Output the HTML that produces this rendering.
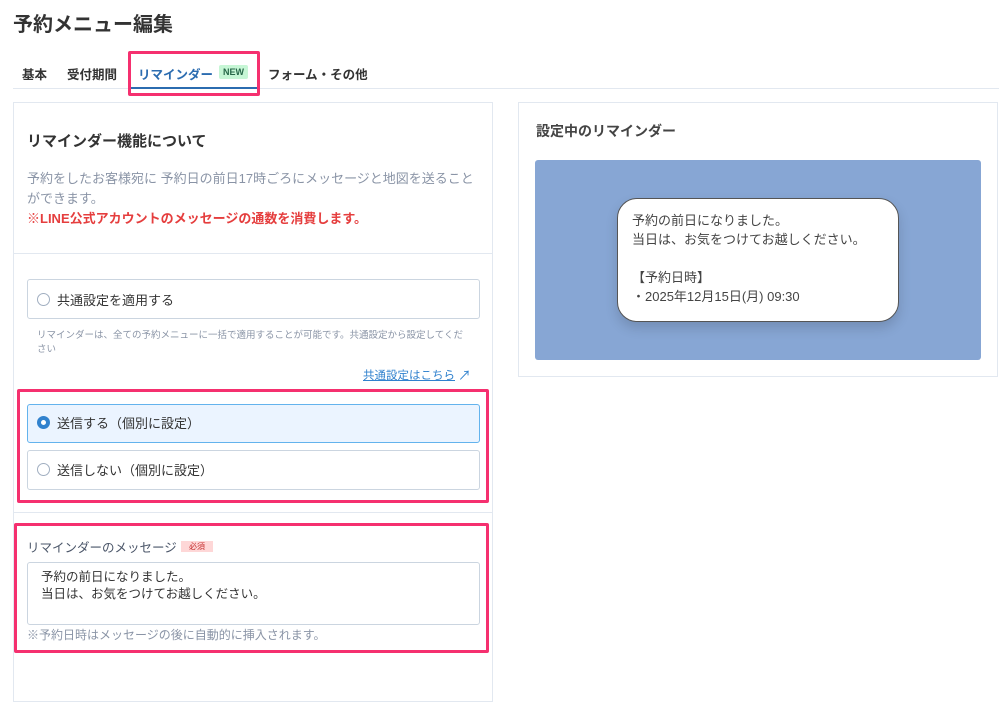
<!DOCTYPE html>
<html><head><meta charset="utf-8"><style>
*{box-sizing:border-box;margin:0;padding:0}
body{width:999px;height:668px;overflow:hidden;background:#fff;font-family:"Liberation Sans","Noto Sans CJK JP",sans-serif;color:#333;position:relative}
.a{position:absolute;white-space:nowrap}
.box{position:absolute;border:1px solid #cbd5e0;border-radius:3px;background:#fff}
.rad{position:absolute;width:13px;height:13px;border:1px solid #a0aec0;border-radius:50%;background:#fff}
.pink{position:absolute;border:3px solid #f5306f;border-radius:2px}
</style></head><body>
<div class="a" style="left:13px;top:8px;font-size:20px;font-weight:bold;color:#333">予約メニュー編集</div>
<div class="a" style="left:22px;top:64px;font-size:12.5px;font-weight:bold;color:#333">基本</div>
<div class="a" style="left:67px;top:64px;font-size:12.5px;font-weight:bold;color:#333">受付期間</div>
<div class="a" style="left:138px;top:64px;font-size:12.5px;font-weight:bold;color:#2b6cb0">リマインダー</div>
<div class="a" style="left:219px;top:65px;width:29px;height:14px;background:#c6f6d5;color:#276749;font-size:9px;font-weight:bold;text-align:center;line-height:14px;border-radius:2px">NEW</div>
<div class="a" style="left:268px;top:64px;font-size:12.5px;font-weight:bold;color:#333">フォーム・その他</div>
<div class="a" style="left:13px;top:88px;width:986px;height:1px;background:#e2e8f0"></div>
<div class="a" style="left:130px;top:87px;width:127px;height:2px;background:#2b6cb0"></div>
<div class="pink" style="left:128px;top:51px;width:132px;height:45px"></div>

<div class="a" style="left:13px;top:102px;width:480px;height:600px;border:1px solid #e2e8f0"></div>
<div class="a" style="left:27px;top:130px;font-size:15px;font-weight:bold;color:#333">リマインダー機能について</div>
<div class="a" style="left:27px;top:169px;font-size:13px;color:#8a94a6;line-height:20px">予約をしたお客様宛に 予約日の前日17時ごろにメッセージと地図を送ること<br>ができます。</div>
<div class="a" style="left:27px;top:208px;font-size:13px;font-weight:bold;color:#e53e3e">※LINE公式アカウントのメッセージの通数を消費します。</div>
<div class="a" style="left:14px;top:253px;width:478px;height:1px;background:#e2e8f0"></div>

<div class="box" style="left:27px;top:279px;width:453px;height:40px"></div>
<div class="rad" style="left:37px;top:293px"></div>
<div class="a" style="left:57px;top:290px;font-size:13px;color:#333">共通設定を適用する</div>
<div class="a" style="left:37px;top:329px;font-size:9.5px;color:#8a94a6;line-height:14px">リマインダーは、全ての予約メニューに一括で適用することが可能です。共通設定から設定してくだ<br>さい</div>
<div class="a" style="left:363px;top:367px;font-size:11.5px;color:#3182ce;text-decoration:underline">共通設定はこちら</div>
<div class="a" style="left:458px;top:365px;font-size:13px;color:#3182ce">↗</div>

<div class="pink" style="left:17px;top:389px;width:472px;height:114px"></div>
<div class="box" style="left:27px;top:404px;width:453px;height:39px;background:#ebf4ff;border-color:#63b3ed"></div>
<div class="rad" style="left:37px;top:416px;border:4px solid #3182ce"></div>
<div class="a" style="left:57px;top:413px;font-size:13px;color:#333">送信する（個別に設定）</div>
<div class="box" style="left:27px;top:450px;width:453px;height:40px"></div>
<div class="rad" style="left:37px;top:463px"></div>
<div class="a" style="left:57px;top:460px;font-size:13px;color:#333">送信しない（個別に設定）</div>
<div class="a" style="left:14px;top:512px;width:478px;height:1px;background:#e2e8f0"></div>

<div class="pink" style="left:14px;top:523px;width:475px;height:130px"></div>
<div class="a" style="left:27px;top:537px;font-size:12.5px;color:#4a5568">リマインダーのメッセージ</div>
<div class="a" style="left:181px;top:541px;width:32px;height:11px;background:#fed7d7;color:#c53030;font-size:8px;line-height:11px;text-align:center">必須</div>
<div class="box" style="left:27px;top:562px;width:453px;height:63px"></div>
<div class="a" style="left:41px;top:569px;font-size:12.5px;color:#333;line-height:17px">予約の前日になりました。<br>当日は、お気をつけてお越しください。</div>
<div class="a" style="left:27px;top:626px;font-size:12px;color:#8a94a6">※予約日時はメッセージの後に自動的に挿入されます。</div>

<div class="a" style="left:518px;top:102px;width:480px;height:275px;border:1px solid #e2e8f0"></div>
<div class="a" style="left:536px;top:121px;font-size:14px;font-weight:bold;color:#444">設定中のリマインダー</div>
<div class="a" style="left:535px;top:160px;width:446px;height:200px;background:#87a6d4;border-radius:3px"></div>
<div class="a" style="left:617px;top:198px;width:282px;height:124px;background:#fff;border:1px solid #555;border-radius:20px;box-shadow:0 6px 12px rgba(0,0,0,0.15)"></div>
<div class="a" style="left:632px;top:211px;font-size:13px;color:#444;line-height:19px">予約の前日になりました。<br>当日は、お気をつけてお越しください。<br><br>【予約日時】<br>・2025年12月15日(月) 09:30</div>
</body></html>
